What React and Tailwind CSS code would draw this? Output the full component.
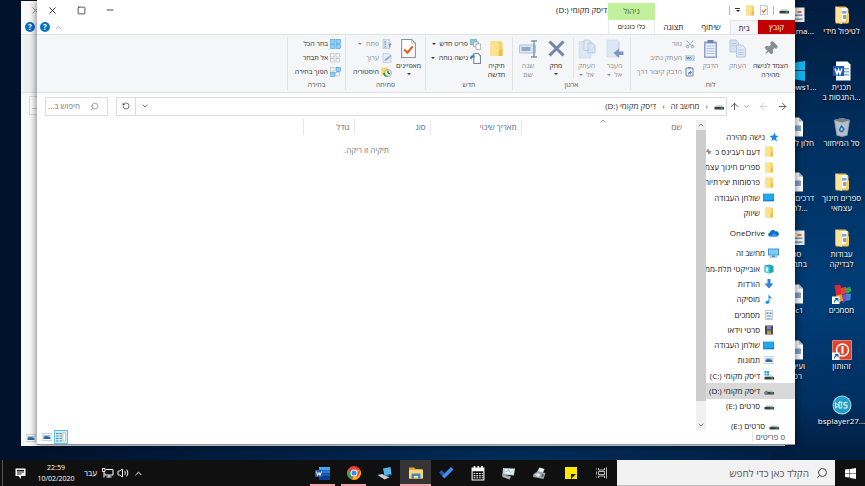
import {
    ArrowLeft,
    ArrowRight,
    ArrowUp,
    ChevronDown,
    ChevronUp,
    Minus,
    Pin,
    RotateCw,
    Scissors,
    Search,
    Square,
    Volume2,
    X
} from "lucide-react";

/* ---------- small drawings ---------- */

const Folder = ({ className = "w-[10px] h-[11px]" }) => (
    <svg viewBox="0 0 20 22" className={className} aria-hidden="true">
        <path d="M2 1h13l3 2v18H2z" fill="#f6d267" />
        <path d="M2 1h11v20H2z" fill="#ffe28f" />
        <path d="M13 14l5-3v10h-5z" fill="#efc048" />
    </svg>
);

const Drive = ({ kind }) => (
    <svg viewBox="0 0 20 20" className="w-[10px] h-[10px]" aria-hidden="true">
        {kind === "system" && <path d="M1 0h4v4H1zM6 0h4v4H6zM1 5h4v4H1zM6 5h4v4H6z" fill="#12a5ea" />}
        <path d="M4 9h12l4 4H1z" fill="#b9bcbe" />
        <path d="M1 12h19v5H1z" fill="#3c4043" />
        <path d="M13 13h5v2h-5z" fill="#39c05a" />
        {kind === "shared" && <path d="M2 10h5v7H2z" fill="#6f8793" />}
    </svg>
);

const Monitor = () => (
    <svg viewBox="0 0 22 20" className="w-[11px] h-[10px]" aria-hidden="true">
        <path d="M0 1h22v14H0z" fill="#3f94cf" />
        <path d="M2 3h18v10H2z" fill="#7cccf3" />
        <path d="M8 15h6v2h4v2H4v-2h4z" fill="#5b95bd" />
    </svg>
);

const Screen = () => (
    <svg viewBox="0 0 20 20" className="w-[11px] h-[11px]" aria-hidden="true">
        <path d="M0 3h20v14H0z" fill="#0b84d8" />
        <path d="M1 4h18v10L1 15z" fill="#22a7f0" />
    </svg>
);

const QuickStar = () => (
    <svg viewBox="0 0 20 20" className="w-[10px] h-[10px]" aria-hidden="true">
        <path d="M12 1l1 6 6 1-5 4 2 7-6-4-5 3 1-6-5-4 7-1z" fill="#1b8ae0" />
    </svg>
);

const Cloud = () => (
    <svg viewBox="0 0 22 16" className="w-[11px] h-[8px]" aria-hidden="true">
        <path d="M5 15a4 4 0 0 1-1-8 6 6 0 0 1 11-2 5 5 0 0 1 3 10z" fill="#0f6fc6" />
        <path d="M5 15l7-7 8 6-2 1z" fill="#2b9be8" />
    </svg>
);

const Cube = () => (
    <svg viewBox="0 0 20 20" className="w-[10px] h-[10px]" aria-hidden="true">
        <path d="M1 3l10-2 8 3v12l-8 3-10-3z" fill="#1fa6b8" />
        <path d="M1 3l10 3v13L1 16z" fill="#57d3dd" />
        <path d="M4 7h4v8H4z" fill="#e9fbfc" />
    </svg>
);

const DownArrow = () => (
    <svg viewBox="0 0 20 20" className="w-[10px] h-[10px]" aria-hidden="true">
        <path d="M7 0h6v9h6l-9 10L1 9h6z" fill="#2f83d6" />
    </svg>
);

const Note = () => (
    <svg viewBox="0 0 20 20" className="w-[10px] h-[10px]" aria-hidden="true">
        <path d="M9 0c1 4 7 5 6 11-1-2-3-4-4-4v9c0 4-8 5-8 1 0-3 3-4 6-3z" fill="#1490e4" />
    </svg>
);

const DocLines = () => (
    <svg viewBox="0 0 20 20" className="w-[10px] h-[10px]" aria-hidden="true">
        <path d="M3 1h14v18H3z" fill="#f4f8fa" stroke="#8399a5" />
        <path d="M5 5h4v3H5zM5 10h10v1H5zM5 13h10v1H5zM11 5h4v3h-4zM5 16h10v1H5z" fill="#4d8aae" />
    </svg>
);

const Film = () => (
    <svg viewBox="0 0 20 20" className="w-[10px] h-[10px]" aria-hidden="true">
        <path d="M2 1h16v18H2z" fill="#3d3d47" />
        <path d="M6 2h8v7H6z" fill="#7388bd" />
        <path d="M6 11h8v7H6z" fill="#c09355" />
        <path d="M4 1v18M16 1v18" stroke="#b9b9c1" strokeDasharray="2 2" />
    </svg>
);

const Picture = () => (
    <svg viewBox="0 0 20 20" className="w-[10px] h-[10px]" aria-hidden="true">
        <path d="M0 3h20v14H0z" fill="#fff" stroke="#9aa5ac" />
        <path d="M3 6h14v5H3z" fill="#8cc5ee" />
        <path d="M3 10l6-2 8 3v3H3z" fill="#33689b" />
    </svg>
);

const CheckedPage = ({ className }) => (
    <svg viewBox="0 0 28 36" className={className} aria-hidden="true">
        <path d="M1 1h19l7 7v27H1z" fill="#fff" stroke="#8a8f94" strokeWidth="2" />
        <path d="M20 1v7h7" fill="none" stroke="#8a8f94" />
        <path d="M6 20l6 6L22 14" fill="none" stroke="#ee5a1c" strokeWidth="4" />
    </svg>
);

const CopyPages = () => (
    <svg viewBox="0 0 34 38" className="w-[17px] h-[19px]" aria-hidden="true">
        <path d="M2 2h12l5 5v19H2z" fill="#d6e1f1" stroke="#b7c6de" strokeWidth="2" />
        <path d="M15 12h12l6 6v18H15z" fill="#dfe8f5" stroke="#b7c6de" strokeWidth="2" />
        <path d="M5 9h9M5 14h9M18 22h11M18 27h11M18 31h11" stroke="#b5c8e5" strokeWidth="2" />
    </svg>
);

const PasteBoard = () => (
    <svg viewBox="0 0 30 40" className="w-[15px] h-[20px]" aria-hidden="true">
        <path d="M2 5h26v33H2z" fill="#8ba3cb" />
        <path d="M5 9h20v26H5z" fill="#eaf1fa" />
        <path d="M9 2h12v6H9z" fill="#6d83a8" />
        <path d="M7 14h16M7 19h16M7 24h16M7 29h16" stroke="#a7c0e4" strokeWidth="2" />
    </svg>
);

const MoveTo = () => (
    <svg viewBox="0 0 36 40" className="w-[18px] h-[20px]" aria-hidden="true">
        <path d="M2 2h20l6 4v30H2z" fill="#d3e0f1" />
        <path d="M2 2h22v34H2z" fill="#dce7f5" stroke="#c3d2e8" />
        <path d="M35 25v7h-9v6L15 28l11-9v6z" fill="#7e96bd" />
    </svg>
);

const CopyTo = () => (
    <svg viewBox="0 0 36 40" className="w-[18px] h-[20px]" aria-hidden="true">
        <path d="M2 5h24v33H2z" fill="#dce7f5" stroke="#c3d2e8" />
        <path d="M12 2h10l4 4v17H12z" fill="#e2ebf7" stroke="#b9c9e2" strokeWidth="2" />
        <path d="M20 8h9l5 5v15H20z" fill="#d6e3f4" stroke="#b9c9e2" strokeWidth="2" />
    </svg>
);

const Cross = () => (
    <svg viewBox="0 0 34 34" className="w-[17px] h-[17px]" aria-hidden="true">
        <path d="M3 3l28 28M31 3L3 31" stroke="#7086ad" strokeWidth="6" />
    </svg>
);

const Rename = () => (
    <svg viewBox="0 0 38 36" className="w-[19px] h-[18px]" aria-hidden="true">
        <path d="M1 10h32v16H1z" fill="#dce7f5" stroke="#b4c6e2" strokeWidth="2" />
        <path d="M5 14h18v8H5z" fill="#93a9ce" />
        <path d="M24 2h5l1 2 1-2h5M30 3v30M24 34h5l1-2 1 2h5" fill="none" stroke="#7e94bb" strokeWidth="3" />
    </svg>
);

const PathIcon = () => (
    <svg viewBox="0 0 20 20" className="w-[10px] h-[10px]" aria-hidden="true">
        <path d="M0 4h20v12H0z" fill="#c5d4ea" />
        <path d="M3 8l2 4 2-4 2 4 2-4M13 12h1M16 12h1" fill="none" stroke="#5c76a3" strokeWidth="2" />
    </svg>
);

const ShortcutPaste = () => (
    <svg viewBox="0 0 18 20" className="w-[9px] h-[10px]" aria-hidden="true">
        <path d="M2 2h14v16H2z" fill="#eaf1fa" stroke="#7289b3" strokeWidth="2" />
        <path d="M6 0h6v3H6z" fill="#7289b3" />
        <path d="M6 15c0-4 2-5 4-5V7l4 4-4 4v-2z" fill="#5f79a8" />
    </svg>
);

const NewItem = () => (
    <svg viewBox="0 0 20 20" className="w-[11px] h-[11px]" aria-hidden="true">
        <path d="M0 1h12v9H0z" fill="#8fc9e4" stroke="#588ba6" />
        <path d="M6 5h9v9H6z" fill="#e4eef3" stroke="#77858d" />
        <path d="M11 9h8v10h-8z" fill="#fff" stroke="#77858d" />
    </svg>
);

const EasyAccess = () => (
    <svg viewBox="0 0 20 20" className="w-[11px] h-[11px]" aria-hidden="true">
        <path d="M7 1h8l4 4v14H7z" fill="#fff" stroke="#77858d" strokeWidth="2" />
        <path d="M0 10c0-4 3-6 5-6V2l4 4-4 4V8c-2 0-2 2-2 4z" fill="#2c82c5" />
    </svg>
);

const OpenIcon = () => (
    <svg viewBox="0 0 20 20" className="w-[10px] h-[10px]" aria-hidden="true">
        <path d="M2 1h13v18H2z" fill="#dbe6f4" stroke="#9db2d4" />
        <path d="M5 4h3v3H5zM5 9h3v3H5zM5 14h3v3H5z" fill="#7e98c6" />
        <path d="M16 8l4 4h-3v5h-3v-5h-2z" fill="#7e98c6" />
    </svg>
);

const EditIcon = () => (
    <svg viewBox="0 0 20 20" className="w-[10px] h-[10px]" aria-hidden="true">
        <path d="M2 1h12l4 4v14H2z" fill="#e6eef8" stroke="#9db2d4" />
        <path d="M5 16l1-4L17 4l2 2L9 15z" fill="#8ea8d2" />
    </svg>
);

const HistoryIcon = () => (
    <svg viewBox="0 0 22 20" className="w-[11px] h-[10px]" aria-hidden="true">
        <path d="M1 1h13v16H1z" fill="#f7d566" />
        <circle cx="14" cy="12" r="7" fill="#e8efe8" stroke="#6e7c74" />
        <path d="M4 12h4a6 6 0 0 0 6 6l-1 2C8 20 5 17 4 12z" fill="#23a13b" />
        <path d="M14 7v5l4 2" fill="none" stroke="#333" strokeWidth="2" />
    </svg>
);

const SelectIcon = ({ kind }) => (
    <svg viewBox="0 0 22 20" className="w-[11px] h-[10px]" aria-hidden="true">
        {[[1, 1], [12, 1], [1, 11], [12, 11]].map(([x, y], idx) => {
            const on = kind === "all" || (kind === "invert" && (idx === 1 || idx === 2));
            return (
                <rect
                    key={idx}
                    x={x}
                    y={y}
                    width={on ? 9 : 7}
                    height={on ? 8 : 7}
                    fill={on ? "#92cdf4" : "#fff"}
                    stroke={on ? "#2f8fd3" : "#9aa0a4"}
                />
            );
        })}
    </svg>
);

const WinLogo = ({ className }) => (
    <svg viewBox="0 0 22 22" className={className} aria-hidden="true">
        <path d="M0 3l9-1v8H0zM10 2l12-2v10H10zM0 11h9v8l-9-1zM10 11h12v11l-12-2z" fill="currentColor" />
    </svg>
);

/* ---------- desktop icons ---------- */

const FullFolder = () => (
    <svg viewBox="0 0 40 40" className="w-5 h-5" aria-hidden="true">
        <path d="M7 3h20l6 5v29H7z" fill="#e9bd51" />
        <path d="M14 6h17v27H14z" fill="#f8fbfd" />
        <path d="M20 12h9v5h-9zM22 20h8v8h-8z" fill="#7fa8c8" />
        <path d="M7 3l13 5v30L7 34z" fill="#ffe398" />
        <path d="M28 20l6-4v18l-6 3z" fill="#f2cb62" />
    </svg>
);

const WordDoc = () => (
    <svg viewBox="0 0 40 40" className="w-5 h-5" aria-hidden="true">
        <path d="M8 1h23l6 6v32H8z" fill="#fff" />
        <path d="M23 14h11v3H23zM23 20h11v3H23zM23 26h11v3H23z" fill="#84aee2" />
        <path d="M2 10h22v20H2z" fill="#1e5bb8" />
        <path d="M6 15l4 11 3-9 3 9 4-11" fill="none" stroke="#fff" strokeWidth="3" />
    </svg>
);

const RecycleBin = () => (
    <svg viewBox="0 0 40 40" className="w-5 h-5" aria-hidden="true">
        <path d="M4 6l16-4 16 4-5 31-11 3-11-3z" fill="#9ba6ae" />
        <path d="M7 8l13 3 13-3-4 27-9 3-9-3z" fill="#b9c1c7" />
        <path d="M4 6l16-4 16 4-16 5z" fill="#75818a" />
        <path d="M15 25l4-7 5 6-3 5h-4z" fill="none" stroke="#1675c8" strokeWidth="3" />
    </svg>
);

const ShortcutMark = () => (
    <>
        <path d="M0 25h15v15H0z" fill="#fff" />
        <path d="M4 37c0-6 3-7 5-7h-3v-2h7v7h-2v-3c-4 0-5 2-5 5z" fill="#1566c0" />
    </>
);

const Documents = () => (
    <svg viewBox="0 0 40 40" className="w-5 h-5" aria-hidden="true">
        <path d="M5 3l12-2 3 18-12 5z" fill="#dc2a35" />
        <path d="M17 9l11-4 3 12-12 5z" fill="#e84042" />
        <path d="M25 10l11-5 3 9-9 6z" fill="#35a443" />
        <path d="M18 23l12-4 3 12-12 7z" fill="#824bb7" />
        <path d="M28 20l10-1-1 13-8 2z" fill="#477ed2" />
        <path d="M8 23l11-3 3 13-9 4z" fill="#e29d28" />
        <ShortcutMark />
    </svg>
);

const Power = () => (
    <svg viewBox="0 0 40 40" className="w-5 h-5" aria-hidden="true">
        <rect width="40" height="40" rx="3" fill="#e9c2b8" />
        <rect x="1" y="1" width="38" height="38" rx="3" fill="#df452d" />
        <circle cx="21" cy="20" r="12" fill="none" stroke="#fff" strokeWidth="3" />
        <path d="M21 12v16" stroke="#fff" strokeWidth="4" />
        <ShortcutMark />
    </svg>
);

const BsPlayer = () => (
    <svg viewBox="0 0 40 40" className="w-5 h-5" aria-hidden="true">
        <circle cx="20" cy="20" r="19" fill="#b8d6df" />
        <circle cx="20" cy="20" r="17" fill="#1d9fc8" />
        <path d="M7 15v11l6-5zM14 14h5l1 2-2 4 2 3-1 3h-5zM31 15h-7v5h6v6h-7" fill="none" stroke="#fff" strokeWidth="2" />
    </svg>
);

const PageIcon = () => (
    <svg viewBox="0 0 40 40" className="w-5 h-5" aria-hidden="true">
        <path d="M6 1h22l8 8v30H6z" fill="#fff" />
        <path d="M28 1v8h8z" fill="#a9b5bd" />
        <path d="M20 17h12v11H20z" fill="#7fa5ce" />
    </svg>
);

const PhotoIcon = () => (
    <svg viewBox="0 0 40 40" className="w-5 h-5" aria-hidden="true">
        <path d="M2 5h37v29H2z" fill="#eff1ec" />
        <path d="M5 19h30v3H5zM5 27h30v3H5z" fill="#7894b5" />
        <path d="M25 12h8v4h-8z" fill="#dd6c57" />
    </svg>
);

const desktopColumns = [
    [
        { icon: <FullFolder />, label: "לטיפול מידי" },
        { icon: <WordDoc />, label: "תכנית\nהתנסות ב..." },
        { icon: <RecycleBin />, label: "סל המיחזור" },
        { icon: <FullFolder />, label: "ספרים חינוך\nעצמאי" },
        { icon: <FullFolder />, label: "עבודות\nלבדיקה" },
        { icon: <Documents />, label: "מסמכים" },
        { icon: <Power />, label: "זהותון" },
        { icon: <BsPlayer />, label: "bsplayer27..." }
    ],
    [
        { icon: <PhotoIcon />, label: "scan_ma..." },
        { icon: <WinLogo className="w-5 h-5 text-[#11b5ee]" />, label: "windows1..." },
        { icon: <PageIcon />, label: "חלון לעבודה" },
        { icon: <PageIcon />, label: "דרכים טובות\nלתמיד..." },
        { icon: <PhotoIcon />, label: "ספר\nבתמונה" },
        { icon: <PageIcon />, label: "doc1" },
        { icon: <PageIcon />, label: "ועיניים\nרכות" },
        null
    ]
];

const DesktopIcon = ({ icon, label }) => (
    <button className="flex flex-col items-center text-white">
        <span className="h-[22px] flex items-center">{icon}</span>
        <span dir="ltr" className="whitespace-pre text-[8px] leading-[10px] text-center [text-shadow:0_1px_2px_#000]">{label}</span>
    </button>
);

/* ---------- explorer window ---------- */

const DriveName = ({ name, letter }) => (
    <span>
        {name} <bdi dir="ltr">({letter}:)</bdi>
    </span>
);

const Caret = ({ className = "" }) => (
    <svg viewBox="0 0 8 4" className={`w-1 h-[2px] shrink-0 ${className}`} aria-hidden="true">
        <path d="M0 0h8L4 4z" fill="currentColor" />
    </svg>
);

const BigAction = ({ icon, label, menu, caret, muted, className = "" }) => (
    <button className={`flex flex-col items-center text-center whitespace-nowrap leading-[9px] shrink-0 ${muted ? "text-[#8b8f94]" : "text-[#333]"} ${className}`}>
        <span className="h-[23px] flex items-center justify-center">{icon}</span>
        <span className="mt-px">{label}</span>
        {menu && (
            <span className="flex items-center gap-[3px]">
                {menu}
                <Caret />
            </span>
        )}
        {caret && <Caret className="mt-[3px]" />}
    </button>
);

const SmallAction = ({ icon, label, caret, muted }) => (
    <button className={`flex items-center gap-[2px] h-[14px] whitespace-nowrap ${muted ? "text-[#8b8f94]" : "text-[#333]"}`}>
        <span className="w-[11px] flex justify-center">{icon}</span>
        {label}
        {caret && <Caret className="mr-[2px]" />}
    </button>
);

const Group = ({ title, className, children }) => (
    <section className={`flex flex-col shrink-0 border-l border-[#dfe1e4] ${className}`}>
        <div className="flex-1 flex items-start">{children}</div>
        <h3 className="text-center leading-[10px] text-[#555b61]">{title}</h3>
    </section>
);

const quickAccess = [
    { icon: <Folder />, name: "דעם רעבינס כ", pinned: true },
    { icon: <Folder />, name: "ספרים חינוך עצמאי" },
    { icon: <Folder />, name: "פרסומות יצירתיות" },
    { icon: <Screen />, name: "שולחן העבודה" },
    { icon: <Folder />, name: "שיווק" }
];

const thisPc = [
    { icon: <Cube />, name: "אובייקטי תלת-ממד" },
    { icon: <DownArrow />, name: "הורדות" },
    { icon: <Note />, name: "מוסיקה" },
    { icon: <DocLines />, name: "מסמכים" },
    { icon: <Film />, name: "סרטי וידאו" },
    { icon: <Screen />, name: "שולחן העבודה" },
    { icon: <Picture />, name: "תמונות" },
    { icon: <Drive kind="system" />, name: <DriveName name="דיסק מקומי" letter="C" /> },
    { icon: <Drive kind="shared" />, name: <DriveName name="דיסק מקומי" letter="D" />, active: true },
    { icon: <Drive />, name: <DriveName name="סרטים" letter="E" /> }
];

const TreeRow = ({ item, top }) => (
    <button
        className={`flex flex-1 items-center gap-[3px] w-full min-h-0 overflow-hidden whitespace-nowrap ${top ? "pr-4" : "pr-[21px]"} ${item.active ? "bg-[#d9d9d9]" : ""}`}
    >
        <span className="w-[11px] shrink-0 flex justify-center">{item.icon}</span>
        <span>{item.name}</span>
        {item.pinned && <Pin className="w-[6px] h-[6px] shrink-0 -rotate-45 fill-[#7b858c] text-[#7b858c]" />}
    </button>
);

const Ribbon = () => (
    <div className="flex h-[59px] shrink-0 overflow-hidden border-y border-[#dfe1e4] bg-[#f5f6f7] py-[2px] text-[7px]">
        <Group title="לוח" className="w-[165px] pr-[5px]">
            <BigAction className="w-[39px]" icon={<Pin className="w-[15px] h-[15px] rotate-45 fill-[#858f95] text-[#858f95]" />} label={<>הצמד לגישה<br />מהירה</>} />
            <BigAction muted className="w-[27px]" icon={<CopyPages />} label="העתק" />
            <BigAction muted className="w-[27px]" icon={<PasteBoard />} label="הדבק" />
            <div className="flex flex-col items-start mr-[2px]">
                <SmallAction muted icon={<Scissors className="w-[10px] h-[10px] -rotate-90 text-[#8298bd]" />} label="גזור" />
                <SmallAction muted icon={<PathIcon />} label="העתק נתיב" />
                <SmallAction muted icon={<ShortcutPaste />} label="הדבק קיצור דרך" />
            </div>
        </Group>
        <Group title="ארגון" className="w-[118px]">
            <BigAction muted className="w-[31px]" icon={<MoveTo />} label="העבר" menu="אל" />
            <BigAction muted className="w-[26px] border-l border-[#e2e4e7]" icon={<CopyTo />} label="העתק" menu="אל" />
            <BigAction className="w-[34px]" icon={<Cross />} label="מחק" caret />
            <BigAction muted className="w-[22px]" icon={<Rename />} label={<>שנה<br />שם</>} />
        </Group>
        <Group title="חדש" className="w-[87px]">
            <BigAction className="w-[31px]" icon={<Folder className="w-[15px] h-[19px]" />} label={<>תיקיה<br />חדשה</>} />
            <div className="flex flex-col items-start">
                <SmallAction icon={<NewItem />} label="פריט חדש" caret />
                <SmallAction icon={<EasyAccess />} label="גישה נוחה" caret />
            </div>
        </Group>
        <Group title="פתיחה" className="w-[80px]">
            <BigAction className="w-[33px]" icon={<CheckedPage className="w-[15px] h-[19px]" />} label="מאפיינים" caret />
            <div className="flex flex-col items-start">
                <SmallAction muted icon={<OpenIcon />} label="פתח" caret />
                <SmallAction muted icon={<EditIcon />} label="ערוך" />
                <SmallAction icon={<HistoryIcon />} label="היסטוריה" />
            </div>
        </Group>
        <Group title="בחירה" className="w-[58px]">
            <div className="flex flex-col items-start pr-1">
                <SmallAction icon={<SelectIcon kind="all" />} label="בחר הכל" />
                <SmallAction icon={<SelectIcon kind="none" />} label="אל תבחר" />
                <SmallAction icon={<SelectIcon kind="invert" />} label="הפוך בחירה" />
            </div>
        </Group>
    </div>
);

const Help = () => (
    <button aria-label="עזרה" className="w-[10px] h-[10px] rounded-full bg-[#0a6fc9] text-white text-[8px] leading-[10px] font-bold text-center">
        ?
    </button>
);

const Header = () => (
    <header className="flex h-[34px] shrink-0">
        <div className="flex flex-col">
            <div className="flex h-5 items-center gap-[5px] pr-[6px]">
                <Drive />
                <span className="w-px h-[9px] bg-[#b5b5b5]" />
                <button aria-label="מאפיינים"><CheckedPage className="w-[8px] h-[10px]" /></button>
                <button aria-label="תיקיה חדשה"><Folder /></button>
                <button aria-label="התאמה אישית" className="flex flex-col items-center gap-px">
                    <span className="w-[5px] h-px bg-[#333]" />
                    <Caret />
                </button>
                <span className="w-px h-[9px] bg-[#b5b5b5]" />
            </div>
            <nav className="flex h-[14px] text-center leading-[14px]">
                <button className="w-[37px] bg-[#c00000] text-white">קובץ</button>
                <button className="w-[28px] border border-b-0 border-[#e2e4e7] bg-[#f5f6f7]">בית</button>
                <button className="w-[38px]">שיתוף</button>
                <button className="w-[37px]">תצוגה</button>
            </nav>
        </div>
        <div className="w-[47px] flex flex-col pt-[3px] text-center">
            <span className="h-[17px] leading-[16px] bg-[#c2f09c] text-[#3f6b33]">ניהול</span>
            <button className="h-[14px] leading-[14px] border-x border-[#e9eaeb] whitespace-nowrap text-[7px]">כלי כוננים</button>
        </div>
        <h1 className="h-5 leading-5 pr-px whitespace-nowrap">
            <DriveName name="דיסק מקומי" letter="D" />
        </h1>
        <div className="mr-auto flex flex-col items-end">
            <div className="flex h-5 items-center gap-[19px] pl-[10px] text-[#222]">
                <button aria-label="מזעור"><Minus className="w-[10px] h-[10px]" /></button>
                <button aria-label="הגדלה"><Square className="w-[9px] h-[9px]" /></button>
                <button aria-label="סגירה"><X className="w-[11px] h-[11px]" /></button>
            </div>
            <div className="flex items-center gap-1 h-[14px] pl-[3px]">
                <ChevronUp className="w-[9px] h-[9px] text-[#999]" />
                <Help />
            </div>
        </div>
    </header>
);

const AddressBar = () => (
    <div className="flex h-[26px] shrink-0 items-center pr-[7px] pl-2 text-[#555]">
        <div className="flex w-[61px] items-center gap-2">
            <button aria-label="קדימה"><ArrowRight className="w-[11px] h-[11px]" /></button>
            <button aria-label="אחורה"><ArrowLeft className="w-[11px] h-[11px] text-[#c9cccf]" /></button>
            <div className="flex items-center gap-[3px]">
                <button aria-label="מיקומים אחרונים"><ChevronDown className="w-[7px] h-[7px]" /></button>
                <button aria-label="למעלה"><ArrowUp className="w-[11px] h-[11px]" /></button>
            </div>
        </div>
        <div className="flex flex-1 h-[19px] items-center border border-[#dcdcdc] text-[#333]">
            <div className="flex flex-1 items-center gap-[6px] pr-[2px]">
                <Drive />
                <span>‹</span>
                <span>מחשב זה</span>
                <span>‹</span>
                <DriveName name="דיסק מקומי" letter="D" />
            </div>
            <button aria-label="מיקומים קודמים" className="px-[5px]"><ChevronDown className="w-2 h-2" /></button>
            <button aria-label="רענון" className="h-full w-[19px] border-r border-[#dcdcdc] flex items-center justify-center">
                <RotateCw className="w-2 h-2 -scale-x-100" />
            </button>
        </div>
        <label className="flex w-[63px] h-[19px] mr-2 items-center border border-[#dcdcdc] pr-2">
            <Search className="w-[9px] h-[9px] shrink-0 -scale-x-100 text-[#888]" />
            <input
                aria-label="חיפוש"
                placeholder="חיפוש ב..."
                className="w-full min-w-0 pr-[10px] outline-none placeholder:text-[#777]"
            />
        </label>
    </div>
);

const ExplorerWindow = () => (
    <main className="absolute top-0 bottom-[15px] left-[37px] right-[70px] flex flex-col bg-white text-[#222] shadow-[0_0_8px_rgba(0,0,0,0.6)] border-b border-[#8b98a3]">
        <Header />
        <Ribbon />
        <AddressBar />
        <div className="flex flex-1 min-h-0">
            <aside className="flex w-[89px] shrink-0 flex-col gap-[5px] pt-[10px] -mb-1">
                <div className="flex flex-col grow-[6] basis-0">
                    <TreeRow top item={{ icon: <QuickStar />, name: "גישה מהירה" }} />
                    {quickAccess.map((item, idx) => <TreeRow key={idx} item={item} />)}
                </div>
                <div className="flex flex-col grow basis-0">
                    <TreeRow top item={{ icon: <Cloud />, name: "OneDrive" }} />
                </div>
                <div className="flex flex-col grow-[11] basis-0">
                    <TreeRow top item={{ icon: <Monitor />, name: "מחשב זה" }} />
                    {thisPc.map((item, idx) => <TreeRow key={idx} item={item} />)}
                </div>
                <div className="flex flex-col grow basis-0">
                    <TreeRow top item={{ icon: <Drive />, name: <DriveName name="סרטים" letter="E" /> }} />
                </div>
            </aside>
            <div className="flex w-[10px] shrink-0 flex-col items-center bg-[#f0f0f0] mt-px text-[#444]">
                <ChevronUp className="w-2 h-[10px]" />
                <div className="w-full grow-[14] bg-[#cdcdcd]" />
                <div className="grow" />
                <ChevronDown className="w-2 h-[10px]" />
            </div>
            <section className="flex-1 min-w-0">
                <table className="w-full table-fixed text-[#5c6b80]">
                    <thead>
                        <tr className="h-4 text-right">
                            <th className="w-[175px] pr-[14px] font-normal border-l border-[#e5e5e5]">
                                <span className="flex items-center">
                                    שם
                                    <ChevronUp className="w-2 h-2 mr-16 mb-2 -mt-1" />
                                </span>
                            </th>
                            <th className="w-[91px] pr-1 font-normal border-l border-[#e5e5e5]">תאריך שינוי</th>
                            <th className="w-[76px] pr-1 font-normal border-l border-[#e5e5e5]">סוג</th>
                            <th className="w-[51px] pr-1 font-normal border-l border-[#e5e5e5]">גודל</th>
                            <th />
                        </tr>
                    </thead>
                </table>
                <p className="pt-[10px] text-center text-[#777]">תיקיה זו ריקה.</p>
            </section>
        </div>
        <footer className="flex h-[14px] shrink-0 items-center justify-between pr-[10px] pl-[5px]">
            <span className="border-l border-[#e5e5e5] pl-[3px] text-[#3f5068]">0 פריטים</span>
            <div className="flex items-center gap-[2px]">
                <button aria-label="פרטים" className="w-[14px] h-[14px] border border-[#5cc0ea] bg-[#cfeefb] flex items-center justify-center">
                    <svg viewBox="0 0 20 20" className="w-[10px] h-[10px]" aria-hidden="true">
                        <path d="M0 3h5M7 3h5M0 8h5M7 8h5M0 13h5M7 13h5M0 18h5M7 18h5" stroke="#5587a5" strokeWidth="2" />
                        <path d="M14 2h5v16h-5z" fill="#fff" stroke="#cf8a6e" />
                    </svg>
                </button>
                <button aria-label="תמונות ממוזערות"><Picture /></button>
            </div>
        </footer>
    </main>
);

const BackWindow = () => (
    <div className="absolute top-px bottom-[14px] left-[21px] right-[80px] flex flex-col items-end bg-[#fafafa]">
        <div className="flex h-[33px] w-4 flex-col items-center gap-[6px] pt-1 pl-[2px]">
            <X className="mr-[-11px] w-[11px] h-[11px] shrink-0 text-[#999]" />
            <Help />
        </div>
        <div className="h-[59px] w-full border-y border-[#dfe1e4] bg-[#f0f1f2]" />
        <div className="mt-[3px] ml-2 flex h-[19px] w-10 items-center justify-end border border-[#dcdcdc] bg-white pl-[2px] text-[#666]">...</div>
        <div className="mt-auto mb-[3px] ml-[5px]"><Picture /></div>
    </div>
);

/* ---------- taskbar ---------- */

const TaskButton = ({ label, open, active, children }) => (
    <button
        aria-label={label}
        className={`relative flex w-[31px] h-full items-center justify-center ${active ? "bg-[#353535]" : ""}`}
    >
        {children}
        {open && <span className={`absolute bottom-0 h-[2px] bg-[#f2a5a9] ${active ? "inset-x-0" : "inset-x-[3px]"}`} />}
    </button>
);

const Taskbar = () => (
    <footer className="flex h-[26px] shrink-0 items-center bg-[#101010] text-white">
        <button aria-label="התחל" className="w-[30px] flex justify-center">
            <WinLogo className="w-[11px] h-[11px]" />
        </button>
        <label className="flex h-full w-[218px] items-center bg-[#f2f2f2] pr-[7px] text-[#444] border-b border-[#bbb]">
            <Search className="w-[12px] h-[12px] shrink-0 -scale-x-100" />
            <input
                aria-label="חיפוש"
                placeholder="הקלד כאן כדי לחפש"
                className="w-full min-w-0 pr-[7px] text-[10px] outline-none placeholder:text-[#555]"
            />
        </label>
        <div className="flex h-full">
            <TaskButton label="תצוגת משימות">
                <svg viewBox="0 0 24 24" className="w-[12px] h-[12px]" fill="none" stroke="#e5e5e5" strokeWidth="1.6" aria-hidden="true">
                    <path d="M5 2v4h12V2M5 22v-4h12v4M5 9h12v6H5zM21 1v22M1 3v2M1 19v2M1 9v6" />
                </svg>
            </TaskButton>
            <TaskButton label="פתקים">
                <svg viewBox="0 0 24 24" className="w-[12px] h-[12px]" aria-hidden="true">
                    <path d="M0 0h24v24H0z" fill="#ffe900" />
                    <path d="M12 24V14h10z" fill="#1c1c08" />
                </svg>
            </TaskButton>
            <TaskButton label="סורק">
                <svg viewBox="0 0 30 26" className="w-[15px] h-[13px]" aria-hidden="true">
                    <path d="M15 1l10 3-4 9-11-3z" fill="#eef1f3" />
                    <path d="M3 14l9-6 15 4-4 12-21-4z" fill="#9da6ab" />
                    <path d="M5 15l8-3 5 4-6 4z" fill="#e0e4e6" />
                    <path d="M20 14l4 1-2 5-4-1z" fill="#4f6674" />
                </svg>
            </TaskButton>
            <TaskButton label="אבחון">
                <svg viewBox="0 0 30 26" className="w-[15px] h-[13px]" aria-hidden="true">
                    <path d="M4 2l24 1-2 14-23-2z" fill="#c6cbce" />
                    <path d="M8 4l18 1-2 9-17-1z" fill="#eef6f8" />
                    <path d="M8 10l4-1 3-4 3 6 6-2" fill="none" stroke="#38a3a0" strokeWidth="1" />
                    <path d="M2 14l10 3 8 2-3 6L3 20z" fill="#aab2b7" />
                </svg>
            </TaskButton>
            <TaskButton label="לוח שנה">
                <svg viewBox="0 0 26 28" className="w-[14px] h-[15px]" aria-hidden="true">
                    <path d="M2 4h22v22H2z" fill="none" stroke="#fff" strokeWidth="2" />
                    <path d="M2 4h22v6H2zM5 0h3v5H5zM12 0h3v5h-3zM19 0h3v5h-3z" fill="#fff" />
                    <path d="M5 14h17M5 18h17M5 22h17" stroke="#fff" strokeWidth="2" strokeDasharray="3 2" />
                </svg>
            </TaskButton>
            <TaskButton label="משימות">
                <svg viewBox="0 0 30 24" className="w-[15px] h-[12px]" aria-hidden="true">
                    <path d="M0 11l5-5 9 9-5 5z" fill="#2259ba" />
                    <path d="M6 18L24 0l5 5-18 18z" fill="#3a8ff0" />
                </svg>
            </TaskButton>
            <TaskButton label="סייר הקבצים" open active>
                <svg viewBox="0 0 28 24" className="w-[14px] h-[12px]" aria-hidden="true">
                    <path d="M0 1h10l3 3h14v19H0z" fill="#e7a933" />
                    <path d="M0 6h28v17H0z" fill="#ffd873" />
                    <path d="M5 13h18v10h-5v-5h-8v5H5z" fill="#368bd2" />
                </svg>
            </TaskButton>
            <TaskButton label="חיבור מרוחק">
                <svg viewBox="0 0 30 26" className="w-[15px] h-[13px]" aria-hidden="true">
                    <path d="M12 3l15-3 2 14-14 3z" fill="#54b6ea" />
                    <path d="M15 17l14-3v2l-13 4z" fill="#2976ab" />
                    <path d="M1 16l9-2 15 7-10 4z" fill="#c5cdd1" />
                </svg>
            </TaskButton>
            <TaskButton label="Chrome" open>
                <svg viewBox="0 0 28 28" className="w-[14px] h-[14px]" aria-hidden="true">
                    <circle cx="14" cy="14" r="14" fill="#e94335" />
                    <path d="M2 7l9 13-1 7A14 14 0 0 1 2 7z" fill="#34a853" />
                    <path d="M10 27l4-6h8l5-12A14 14 0 0 1 10 27z" fill="#fbbc05" />
                    <path d="M27 9H14v6z" fill="#fbbc05" />
                    <circle cx="14" cy="14" r="7" fill="#fff" />
                    <circle cx="14" cy="14" r="5" fill="#4285f4" />
                </svg>
            </TaskButton>
            <TaskButton label="Word" open>
                <svg viewBox="0 0 30 26" className="w-[15px] h-[13px]" aria-hidden="true">
                    <path d="M8 0h22v7H8z" fill="#41a5ee" />
                    <path d="M8 7h22v6H8z" fill="#2b7cd3" />
                    <path d="M8 13h22v6H8z" fill="#185abd" />
                    <path d="M8 19h22v7H8z" fill="#103f91" />
                    <path d="M0 6h15v14H0z" fill="#1b5cbe" />
                    <path d="M3 9l2 8 3-6 2 6 3-8" fill="none" stroke="#fff" strokeWidth="2" />
                </svg>
            </TaskButton>
        </div>
        <div className="mr-auto flex h-full items-center">
            <button aria-label="סמלים מוסתרים"><ChevronUp className="w-[11px] h-[11px]" /></button>
            <button aria-label="עוצמת קול" className="mr-[4px]"><Volume2 className="w-[12px] h-[12px]" /></button>
            <button aria-label="רשת" className="mr-[3px]">
                <svg viewBox="0 0 24 20" className="w-[12px] h-[10px]" fill="none" stroke="#fff" strokeWidth="2" aria-hidden="true">
                    <path d="M8 3h14v11H6v-3M14 14v4M9 18h10M1 1h5v6H1zM4 7v12" />
                </svg>
            </button>
            <button className="mr-[5px] text-[8px]">עבר</button>
            <button className="mr-2 flex w-10 flex-col items-center text-[7px] leading-[11px]">
                <time>22:59</time>
                <time>10/02/2020</time>
            </button>
            <button aria-label="התראות" className="mr-[10px]">
                <svg viewBox="0 0 22 22" className="w-[11px] h-[11px]" aria-hidden="true">
                    <path d="M1 1h20v15H12v6l-5-6H1z" fill="#fff" />
                    <path d="M4 5h14M4 8h14M4 12h9" stroke="#111" strokeWidth="2" />
                </svg>
            </button>
            <span className="mr-3 ml-[2px] h-full w-px bg-[#555]" />
        </div>
    </footer>
);

const App = () => (
    <div dir="rtl" className="flex h-screen flex-col overflow-hidden font-['Open_Sans','Noto_Sans',sans-serif] text-[8px] leading-[10px]">
        <div className="relative flex-1 min-h-0 bg-[linear-gradient(90deg,#00112b_0%,#002c58_60%,#001d3e_100%)]">
            <div className="grid h-full w-[94px] grid-cols-2 grid-rows-8 grid-flow-col pt-1 pb-[10px] bg-[linear-gradient(180deg,#001c3e_0%,#003060_30%,#003e78_65%,#002f60_88%,#001d3e_100%)]">
                {desktopColumns.flat().map((item, idx) => (item ? <DesktopIcon key={idx} {...item} /> : <span key={idx} />))}
            </div>
            <BackWindow />
            <ExplorerWindow />
        </div>
        <Taskbar />
    </div>
);

export default App;
